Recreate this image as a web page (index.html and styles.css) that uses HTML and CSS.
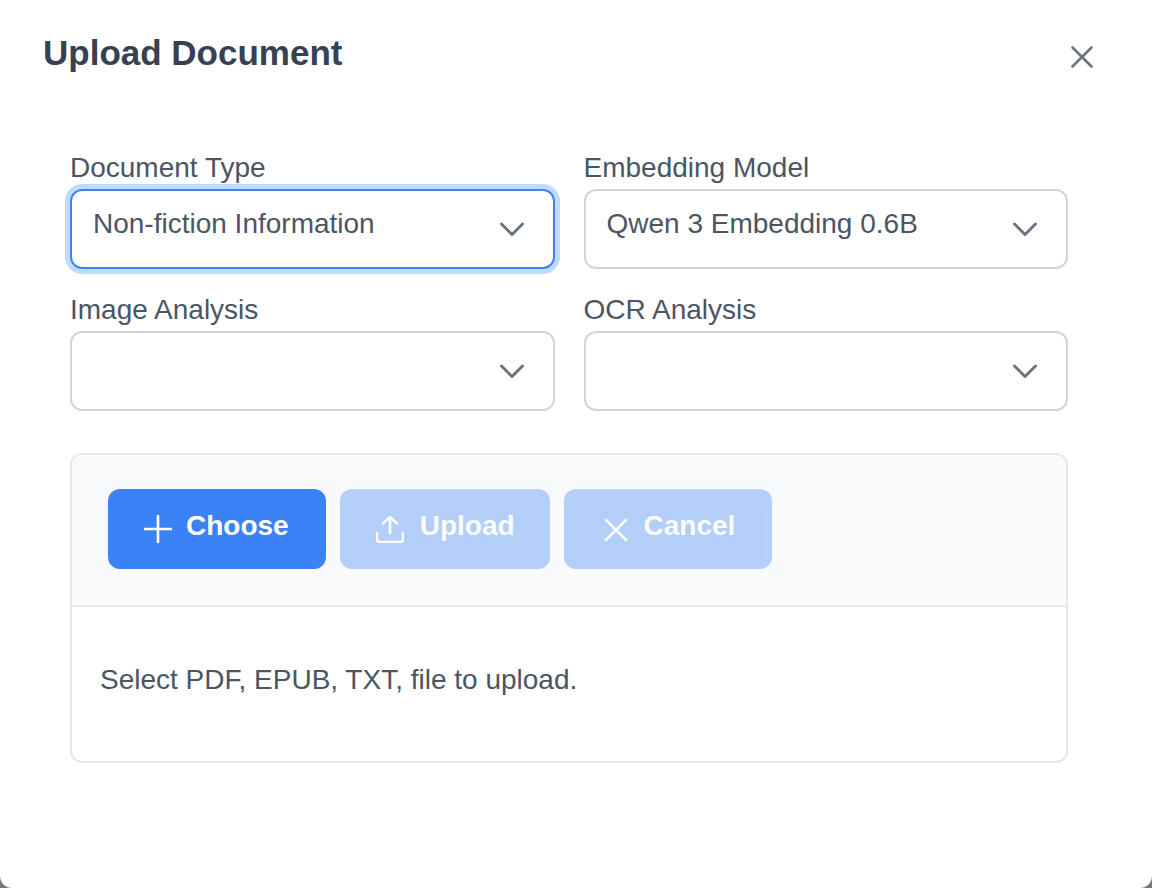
FILE: index.html
```html
<!DOCTYPE html>
<html lang="en">
<head>
  <meta charset="UTF-8">
  <meta name="viewport" content="width=device-width, initial-scale=1.0">
  <title>Upload Document</title>
  <link rel="stylesheet" href="styles.css">
</head>
<body>
  <div class="dialog">
    <div class="dialog-header">
      <h1>Upload Document</h1>
      <button type="button" class="close-button" aria-label="Close">
        <svg width="24" height="24" viewBox="0 0 24 24"><path d="M2.5 2.5 L21.5 21.5 M21.5 2.5 L2.5 21.5"/></svg>
      </button>
    </div>
    <div class="dialog-body">
      <div class="fields">
        <div class="field">
          <label>Document Type</label>
          <div class="select focused">
            <span>Non-fiction Information</span>
            <svg class="chevron" width="26" height="16" viewBox="0 0 26 16"><path d="M2.5 2 L13 12.5 L23.5 2"/></svg>
          </div>
        </div>
        <div class="field">
          <label>Embedding Model</label>
          <div class="select">
            <span>Qwen 3 Embedding 0.6B</span>
            <svg class="chevron" width="26" height="16" viewBox="0 0 26 16"><path d="M2.5 2 L13 12.5 L23.5 2"/></svg>
          </div>
        </div>
        <div class="field">
          <label>Image Analysis</label>
          <div class="select">
            <span></span>
            <svg class="chevron" width="26" height="16" viewBox="0 0 26 16"><path d="M2.5 2 L13 12.5 L23.5 2"/></svg>
          </div>
        </div>
        <div class="field">
          <label>OCR Analysis</label>
          <div class="select">
            <span></span>
            <svg class="chevron" width="26" height="16" viewBox="0 0 26 16"><path d="M2.5 2 L13 12.5 L23.5 2"/></svg>
          </div>
        </div>
      </div>
      <div class="upload">
        <div class="upload-buttons">
          <button type="button" class="btn">
            <svg width="28" height="28" viewBox="0 0 28 28"><path d="M14 1 V27 M1 14 H27"/></svg>
            <span>Choose</span>
          </button>
          <button type="button" class="btn disabled upload-btn">
            <svg width="28" height="28" viewBox="0 0 28 28"><path d="M14 18 V2 M7 8.5 L14 2 L21 8.5 M1 18 V24 Q1 27 4 27 H24 Q27 27 27 24 V18"/></svg>
            <span>Upload</span>
          </button>
          <button type="button" class="btn disabled">
            <svg width="28" height="28" viewBox="0 0 28 28"><path d="M6 5 L26 25 M26 5 L6 25"/></svg>
            <span>Cancel</span>
          </button>
        </div>
        <div class="upload-content">Select PDF, EPUB, TXT, file to upload.</div>
      </div>
    </div>
  </div>
</body>
</html>
```

FILE: styles.css
```css
html, body {
    height: 100%;
}
body {
    margin: 0;
    background-color: #777777;
    font-family: "Liberation Sans", Arial, sans-serif;
    color: #4b5563;
}
.dialog {
    box-sizing: border-box;
    height: 888px;
    background-color: #ffffff;
    border-radius: 0 0 12px 12px;
}
.dialog-header {
    display: flex;
    justify-content: space-between;
    align-items: flex-start;
    padding: 33px 58px 0 43px;
}
.dialog-header h1 {
    margin: 0;
    font-size: 35px;
    line-height: 40px;
    font-weight: 700;
    color: #374151;
}
.close-button {
    background: none;
    border: none;
    padding: 0;
    margin-top: 12px;
    display: flex;
}
.close-button path {
    fill: none;
    stroke: #6b7280;
    stroke-width: 2.6;
    stroke-linecap: round;
}
.dialog-body {
    padding: 74px 84px 0 70px;
}
.fields {
    display: grid;
    grid-template-columns: 1fr 1fr;
    column-gap: 29px;
    row-gap: 20px;
    margin-bottom: 42px;
}
.field label {
    display: block;
    font-size: 28px;
    line-height: 42px;
}
.select {
    box-sizing: border-box;
    height: 80px;
    display: flex;
    justify-content: space-between;
    border: 2px solid #d1d5db;
    border-radius: 12px;
    padding: 14px 28px 0 21px;
    font-size: 28px;
    line-height: 38px;
}
.select.focused {
    border-color: #3b82f6;
    box-shadow: 0 0 0 5px #bfdbfe;
}
.chevron {
    margin-top: 17px;
}
.chevron path {
    fill: none;
    stroke: #6b7280;
    stroke-width: 3;
    stroke-linecap: round;
    stroke-linejoin: round;
}
.upload {
    border: 2px solid #e5e7eb;
    border-radius: 12px;
    overflow: hidden;
}
.upload-buttons {
    display: flex;
    gap: 14px;
    padding: 34px 36px 36px;
    background-color: #f9fafb;
    border-bottom: 2px solid #e5e7eb;
}
.btn {
    box-sizing: border-box;
    height: 80px;
    display: flex;
    align-items: center;
    gap: 14px;
    padding: 0 37px 0 36px;
    border: none;
    border-radius: 12px;
    background-color: #3b82f6;
    color: #ffffff;
    font-family: inherit;
    font-size: 28px;
    font-weight: 700;
}
.btn span {
    margin-bottom: 7px;
}
.btn svg {
    fill: none;
    stroke: #ffffff;
    stroke-width: 2.6;
    stroke-linecap: round;
    stroke-linejoin: round;
    flex-shrink: 0;
}
.btn.disabled {
    opacity: 0.36;
    gap: 16px;
}
.btn.upload-btn {
    padding-right: 35px;
}
.upload-content {
    padding: 55px 28px 63px;
    font-size: 28px;
    line-height: 36px;
}
```
